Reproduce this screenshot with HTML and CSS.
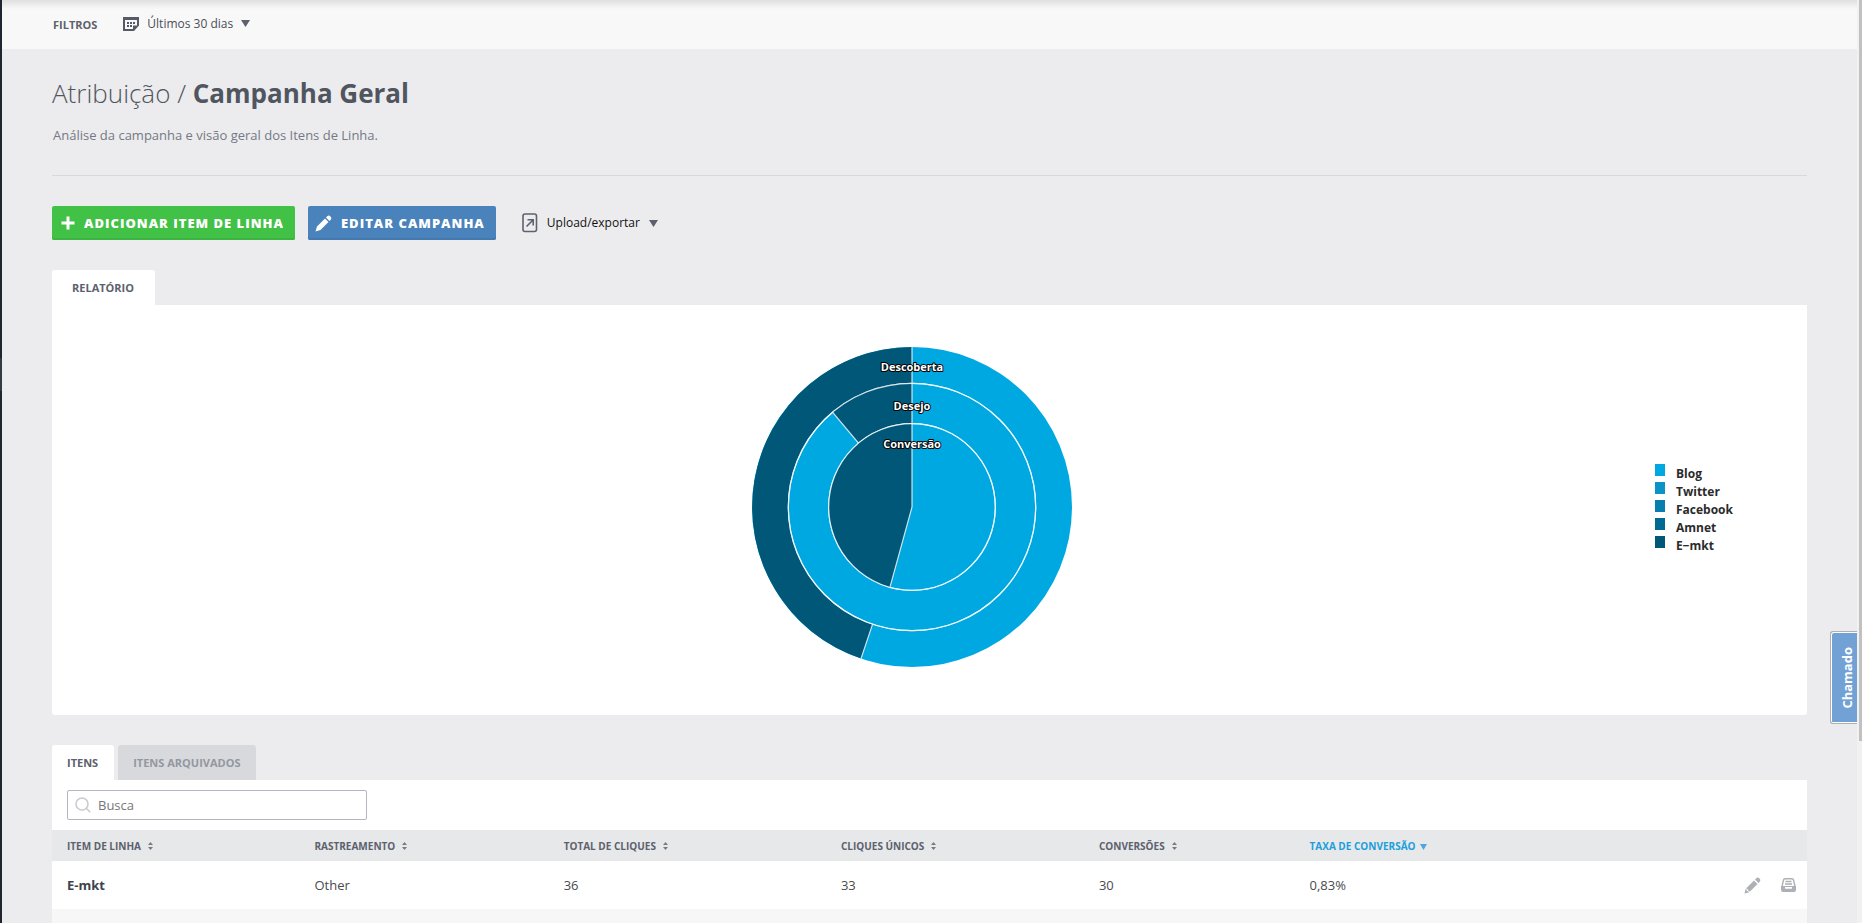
FILE: index.html
```html
<!DOCTYPE html>
<html lang="pt-BR">
<head>
<meta charset="utf-8">
<title>Atribuição / Campanha Geral</title>
<link rel="stylesheet" href="styles.css">
</head>
<body>
<div class="app">
  <div class="rail"></div>
  <div class="page">
    <header class="filters">
      <h2 class="filters-title">Filtros</h2>
      <button class="dropdown" type="button">
        <svg width="16" height="14" viewBox="0 0 16 14" aria-hidden="true"><path fill="#555a66" fill-rule="evenodd" d="M0 0h16v8.500l-5 5.500H0zM2 3v9h8V8.500h4V3z"/><path fill="#555a66" d="M4 5h2v2H4zM7 5h2v2H7zM10 5h2v2h-2zM4 8h2v2H4zM7 8h2v2H7z"/></svg>
        <span>Últimos 30 dias</span>
        <svg class="caret" width="9" height="7" viewBox="0 0 9 7" aria-hidden="true"><path d="M0 0h9L4.500 7z"/></svg>
      </button>
    </header>
    <main class="content">
      <div class="heading">
        <h1>Atribuição / <strong>Campanha Geral</strong></h1>
        <p>Análise da campanha e visão geral dos Itens de Linha.</p>
      </div>
      <div class="actions">
        <button class="btn btn-add" type="button">
          <svg width="14" height="14" viewBox="0 0 14 14" aria-hidden="true"><path fill="#fff" d="M5.500 0.500h3v5h5v3h-5v5h-3v-5h-5v-3h5z"/></svg>
          <span>Adicionar item de linha</span>
        </button>
        <button class="btn btn-edit" type="button">
          <svg width="17" height="17" viewBox="0 0 17 17" aria-hidden="true"><path fill="#fff" d="M0.500 16.500l1.500-5 8-8 3.500 3.500-8 8zM11 2.500l1.500-1.500q1.500-1 3 .5t.5 3L14.500 6z"/></svg>
          <span>Editar campanha</span>
        </button>
        <button class="dropdown export" type="button">
          <svg width="16" height="20" viewBox="0 0 16 20" aria-hidden="true"><g fill="none" stroke="#5d626e" stroke-width="1.600"><rect x="1" y="1" width="13.500" height="17.500" rx="2"/><path d="M4.500 13.500l6-6M5.500 6.800h5.700v5.700"/></g></svg>
          <span>Upload/exportar</span>
          <svg class="caret" width="9" height="7" viewBox="0 0 9 7" aria-hidden="true"><path d="M0 0h9L4.500 7z"/></svg>
        </button>
      </div>

      <section class="report">
        <div class="tabs"><button class="tab tab-wide" type="button">Relatório</button></div>
        <div class="chart-panel">
          <svg class="chart" width="322" height="322" viewBox="-161 -161 322 322" role="img" aria-label="Descoberta, Desejo e Conversão por canal">
            <circle r="160" fill="#00a8e2"/>
            <path fill="#005777" d="M0 0V-160A160 160 0 0 0 -51 151.600z"/>
            <path class="line" d="M0 0V-160M0 0L-51 151.600"/>
            <circle class="line" r="123.700" fill="#00a8e2"/>
            <path fill="#005777" d="M0 0V-123.700A123.700 123.700 0 0 0 -79.500 -94.800z"/>
            <path class="line" d="M0 0V-123.700M0 0L-79.500 -94.800"/>
            <circle class="ring line" r="123.700"/>
            <circle class="line" r="83.300" fill="#00a8e2"/>
            <path fill="#005777" d="M0 0V-83.300A83.300 83.300 0 0 0 -22.100 80.300z"/>
            <path class="line" d="M0 0V-83.300M0 0L-22.100 80.300"/>
            <circle class="ring line" r="83.300"/>
            <g class="chart-label" text-anchor="middle">
              <text y="-136">Descoberta</text>
              <text y="-97">Desejo</text>
              <text y="-59">Conversão</text>
            </g>
          </svg>
          <ul class="legend">
            <li class="blog">Blog</li>
            <li class="twitter">Twitter</li>
            <li class="facebook">Facebook</li>
            <li class="amnet">Amnet</li>
            <li class="emkt">E−mkt</li>
          </ul>
        </div>
      </section>

      <section class="items">
        <div class="tabs">
          <button class="tab" type="button">Itens</button>
          <button class="tab tab-off" type="button">Itens arquivados</button>
        </div>
        <div class="items-panel">
          <div class="search">
            <svg width="16" height="16" viewBox="0 0 16 16" aria-hidden="true"><g fill="none" stroke="#c9cbce" stroke-width="1.600"><circle cx="7" cy="7" r="6"/><path d="M11.200 11.200l4 4"/></g></svg>
            <input type="text" placeholder="Busca" aria-label="Busca">
          </div>
          <table>
            <colgroup><col class="c1"><col class="c2"><col class="c3"><col class="c4"><col class="c5"><col><col class="c7"></colgroup>
            <thead>
              <tr>
                <th>Item de linha<svg class="sort" width="5" height="8" viewBox="0 0 5 8"><path d="M2.500 0L5 3H0zM2.500 8L0 5h5z"/></svg></th>
                <th>Rastreamento<svg class="sort" width="5" height="8" viewBox="0 0 5 8"><path d="M2.500 0L5 3H0zM2.500 8L0 5h5z"/></svg></th>
                <th>Total de cliques<svg class="sort" width="5" height="8" viewBox="0 0 5 8"><path d="M2.500 0L5 3H0zM2.500 8L0 5h5z"/></svg></th>
                <th>Cliques únicos<svg class="sort" width="5" height="8" viewBox="0 0 5 8"><path d="M2.500 0L5 3H0zM2.500 8L0 5h5z"/></svg></th>
                <th>Conversões<svg class="sort" width="5" height="8" viewBox="0 0 5 8"><path d="M2.500 0L5 3H0zM2.500 8L0 5h5z"/></svg></th>
                <th class="sorted">Taxa de conversão<svg class="sort-down" width="7" height="6" viewBox="0 0 7 6"><path d="M0 0h7L3.500 6z"/></svg></th>
                <th></th>
              </tr>
            </thead>
            <tbody>
              <tr>
                <td><strong>E-mkt</strong></td>
                <td>Other</td>
                <td>36</td>
                <td>33</td>
                <td>30</td>
                <td>0,83%</td>
                <td>
                  <div class="row-actions">
                    <button type="button" aria-label="Editar"><svg width="17" height="17" viewBox="0 0 17 17"><path fill="#adb0b5" d="M0.500 16.500l1-4.500 1 .5.5 1.500 1.500.5.500 1zM2.500 11l7.500-7.500 3.500 3.500-7.500 7.500-1.500-.5-.5-1.500-1.500-.5zM11 2.500l1.500-1.500q1.500-1 3 .5t.5 3L14.500 6z"/></svg></button>
                    <button type="button" aria-label="Arquivar"><svg width="15" height="14" viewBox="0 0 15 14"><path fill="none" stroke="#adb0b5" stroke-width="1.400" d="M1 8.500L2.500 2Q2.800.7 4 .7h7q1.200 0 1.500 1.300L14 8.500M4.500 3.500h6M4 6h7"/><path fill="#adb0b5" fill-rule="evenodd" d="M0 8h15v4q0 2-2 2H2q-2 0-2-2zM4 9v1.700h7V9z"/></svg></button>
                  </div>
                </td>
              </tr>
              <tr><td></td><td></td><td></td><td></td><td></td><td></td><td></td></tr>
            </tbody>
          </table>
        </div>
      </section>
    </main>
    <button class="support" type="button"><span>Chamado</span></button>
  </div>
  <div class="scrollbar"><div class="thumb"></div></div>
</div>
</body>
</html>
```
FILE: styles.css
```css
* { box-sizing: border-box; }
body, h1, h2, p, ul { margin: 0; padding: 0; }
body {
  font-family: "Open Sans", sans-serif;
  font-size: 13px;
  color: #4a4f59;
  background: #ececee;
}
button { font: inherit; color: inherit; border: 0; background: none; padding: 0; cursor: pointer; }
svg { display: block; flex: none; }

.app { display: flex; height: 100vh; overflow: hidden; }
.rail { flex: none; width: 2px; background: linear-gradient(#20252f 358px, #343a44 358px, #343a44 391px, #20252f 391px); }
.page { flex: 1; min-width: 0; position: relative; }

.filters {
  display: flex;
  align-items: center;
  gap: 26px;
  height: 49px;
  padding: 0 50px 2px 51px;
  background: linear-gradient(#dfdfdf, #f8f8f8 9px);
}
.filters-title { font-size: 11px; line-height: 15px; font-weight: 700; text-transform: uppercase; color: #5c616d; padding-top: 2px; }
.dropdown { display: flex; align-items: center; gap: 8px; font-size: 12px; line-height: 16px; color: #4a4f59; }
.caret { fill: #5c616d; }

.content { padding: 0 50px; }
.heading { padding: 26px 0 31px; border-bottom: 1px solid #d8d9dc; }
h1 { font-size: 26px; line-height: 36px; font-weight: 300; color: #505660; }
h1 strong { font-weight: 700; }
.heading p { margin-top: 15px; padding-left: 1px; font-size: 13px; line-height: 18px; color: #747984; }

.actions { display: flex; align-items: center; padding-top: 30px; }
.btn {
  display: flex;
  align-items: center;
  height: 34px;
  padding: 0 11px 0 9px;
  gap: 9px;
  border-radius: 2px;
  color: #fff;
  font-size: 13px;
  font-weight: 800;
  letter-spacing: 1px;
  text-transform: uppercase;
  white-space: nowrap;
}
.btn-add { background: #42c147; box-shadow: inset 0 -2px #3cb441; }
.btn-edit { background: #4a82bb; box-shadow: inset 0 -2px #4479b0; margin-left: 13px; padding-left: 7px; }
.export { margin-left: 26px; color: #111; gap: 9px; }

.report { padding-top: 30px; }
.tabs { display: flex; gap: 4px; }
.tab {
  height: 35px;
  padding: 0 16px 0 15px;
  border-radius: 3px 3px 0 0;
  background: #fff;
  font-size: 11px;
  font-weight: 700;
  text-transform: uppercase;
  color: #5c616d;
}
.tab-wide { padding: 0 21px 0 20px; }
.tab-off { background: #d8d9dc; color: #9297a0; }

.chart-panel {
  display: grid;
  grid-template-columns: 1fr auto 1fr;
  align-items: center;
  height: 410px;
  padding-bottom: 6px;
  background: #fff;
  border-radius: 0 0 3px 3px;
}
.chart { grid-column: 2; margin-right: 36px; }
.line { stroke: #fff; stroke-opacity: 0.8; stroke-width: 1.200; }
.ring { fill: none; }
.chart-label { font-size: 11px; font-weight: 700; fill: #fff; stroke: #000; stroke-width: 2px; stroke-linejoin: round; paint-order: stroke; }
.legend { justify-self: end; width: 152px; padding-top: 4px; list-style: none; font-size: 12px; font-weight: 700; color: #2b2b2b; }
.legend li { display: flex; gap: 11px; height: 18px; line-height: 20px; }
.legend li::before { content: ""; width: 10px; height: 12px; }
.legend .blog::before { background: #00a8e2; }
.legend .twitter::before { background: #0b93c8; }
.legend .facebook::before { background: #067fae; }
.legend .amnet::before { background: #006b92; }
.legend .emkt::before { background: #005777; }

.items { padding-top: 30px; }
.items-panel { background: #fff; }
.search { display: flex; align-items: center; padding: 10px 15px; }
.search svg { margin: 0 -24px 0 8px; z-index: 1; }
.search input {
  width: 300px;
  height: 30px;
  border: 1px solid #b4b5c1;
  border-radius: 2px;
  padding: 0 10px 0 30px;
  font: 13px "Open Sans", sans-serif;
  color: #4a4f59;
}
.search input::placeholder { color: #777; opacity: 1; }

table { width: 100%; border-collapse: collapse; table-layout: fixed; }
.c1 { width: 14.1%; }
.c2 { width: 14.2%; }
.c3 { width: 15.8%; }
.c4 { width: 14.7%; }
.c5 { width: 12%; }
.c7 { width: 100px; }
th, td { padding: 0 0 0 15px; text-align: left; white-space: nowrap; }
th { height: 31px; background: #e7e8ea; font-size: 10px; font-weight: 700; text-transform: uppercase; color: #5c616d; }
.sorted { color: #1c9fdc; }
td { height: 48px; font-size: 13px; color: #4a4a4f; }
td strong { color: #3d434e; }
tbody tr:nth-child(even) { background: #f7f7f7; }
.sort, .sort-down { display: inline-block; margin-left: 7px; fill: #777c86; }
.sort-down { margin-left: 4px; fill: #4fa5dc; }
.row-actions { display: flex; align-items: center; justify-content: flex-end; gap: 20px; padding-right: 11px; }

.support {
  position: absolute;
  right: 0;
  top: 631px;
  width: 27px;
  height: 93px;
  padding-left: 5px;
  border: 1px solid #b0b0b0;
  border-right: 0;
  border-radius: 3px 0 0 3px;
  background: #72a2d5;
  box-shadow: inset 1px 1px #fff, inset 0 -1px #fff;
  color: #fff;
  font-size: 13px;
  font-weight: 700;
  display: flex;
  align-items: center;
  justify-content: center;
}
.support span { writing-mode: vertical-rl; transform: rotate(180deg); }

.scrollbar { flex: none; width: 5px; padding-left: 2px; background: #f1f1f1; }
.thumb { height: 80.3%; background: #c1c1c1; }
```
